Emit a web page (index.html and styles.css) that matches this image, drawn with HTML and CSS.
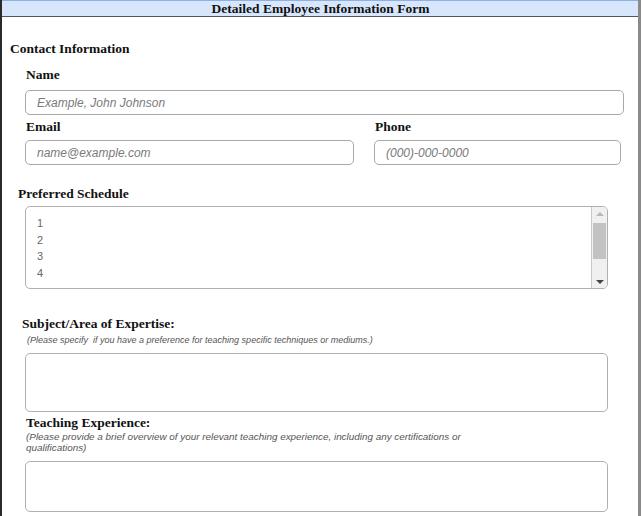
FILE: index.html
```html
<!DOCTYPE html>
<html>
<head>
<meta charset="utf-8">
<link rel="stylesheet" href="styles.css">
</head>
<body>
<div class="frame">
  <div class="titlebar">Detailed Employee Information Form</div>
  <div class="content">
    <h2 class="section">Contact Information</h2>
    <div class="field name-field">
      <label class="label">Name</label>
      <input class="input" type="text" placeholder="Example, John Johnson">
    </div>
    <div class="row">
      <div class="field email-field">
        <label class="label">Email</label>
        <input class="input" type="text" placeholder="name@example.com">
      </div>
      <div class="field phone-field">
        <label class="label">Phone</label>
        <input class="input" type="text" placeholder="(000)-000-0000">
      </div>
    </div>
    <div class="schedule">
      <label class="label">Preferred Schedule</label>
      <div class="listbox">
        <div class="options">
          <div class="option">1</div>
          <div class="option">2</div>
          <div class="option">3</div>
          <div class="option">4</div>
        </div>
        <div class="scrollbar">
          <div class="arrow up"></div>
          <div class="track"><div class="thumb"></div></div>
          <div class="arrow down"></div>
        </div>
      </div>
    </div>
    <div class="block subject">
      <label class="label">Subject/Area of Expertise:</label>
      <div class="note indent">(Please specify &nbsp;if you have a preference for teaching specific techniques or mediums.)</div>
      <textarea class="area area-tall"></textarea>
    </div>
    <div class="block teaching">
      <label class="label">Teaching Experience:</label>
      <div class="note wrap">(Please provide a brief overview of your relevant teaching experience, including any certifications or qualifications)</div>
      <textarea class="area area-short"></textarea>
    </div>
  </div>
</div>
</body>
</html>
```
FILE: styles.css
```css
* { box-sizing: border-box; }
html, body { margin: 0; padding: 0; background: #fff; }
body { font-family: "Liberation Serif", "Times New Roman", serif; color: #111; }

.frame {
  width: 641px;
  height: 516px;
  overflow: hidden;
  border-left: 2px solid #2a2a2a;
  border-right: 3px solid #8a8a8a;
  display: flex;
  flex-direction: column;
}
.titlebar {
  height: 17px;
  margin-left: -2px;
  margin-right: -3px;
  background: #d8e6fb;
  border: 1px solid #8fb0e6;
  border-bottom: 1px solid #555;
  text-align: center;
  font-weight: bold;
  font-size: 13.5px;
  line-height: 15px;
  color: #111;
}
.content {
  padding: 24px 0 0 7px;
  display: flex;
  flex-direction: column;
}
.section {
  margin: 0 0 0 1px;
  font-size: 13.5px;
  line-height: 16px;
  font-weight: bold;
}
.label {
  display: block;
  font-weight: bold;
  font-size: 13.5px;
  line-height: 16px;
}
.field { display: flex; flex-direction: column; }
.name-field { margin: 10px 0 0 16px; width: 599px; }
.name-field .label { margin-bottom: 7px; margin-left: 1px; }
.row { display: flex; margin: 4px 0 0 16px; }
.email-field { width: 329px; }
.phone-field { width: 247px; margin-left: 20px; }
.row .label { margin-bottom: 5px; margin-left: 1px; }

.input {
  height: 25px;
  border: 1px solid #a9a9a9;
  border-radius: 5px;
  padding: 0 11px;
  font-family: "Liberation Sans", Arial, sans-serif;
  font-size: 12px;
  font-style: italic;
  color: #333;
  background: #fff;
  outline: none;
}
.input::placeholder { color: #7a7a7a; }

.schedule { margin: 21px 0 0 9px; }
.schedule .label { margin-bottom: 4px; }
.listbox {
  margin-left: 7px;
  width: 583px;
  height: 83px;
  border: 1px solid #b0b0b0;
  border-radius: 5px;
  display: flex;
  overflow: hidden;
  font-family: "Liberation Sans", Arial, sans-serif;
}
.options { flex: 1; padding: 8px 0 0 11px; }
.option { font-size: 11px; line-height: 16.5px; color: #666; }
.scrollbar {
  width: 16px;
  border-left: 1px solid #c8c8c8;
  background: #f0f0f0;
  display: flex;
  flex-direction: column;
}
.arrow { height: 14px; position: relative; }
.arrow::after {
  content: "";
  position: absolute;
  left: 4px;
  width: 0; height: 0;
  border-left: 4px solid transparent;
  border-right: 4px solid transparent;
}
.arrow.up::after { top: 5px; border-bottom: 4px solid #b8b8b8; }
.arrow.down::after { top: 6px; border-top: 4px solid #444; }
.track { flex: 1; padding: 2px 1px 0 1px; }
.thumb { height: 36px; background: #c2c2c2; }

.subject { margin: 27px 0 0 13px; }
.teaching { margin: 3px 0 0 17px; }
.note {
  font-family: "Liberation Sans", Arial, sans-serif;
  font-style: italic;
  font-size: 9px;
  line-height: 11px;
  color: #555;
}
.note.indent { margin: 3px 0 0 5px; }
.note.wrap { width: 445px; font-size: 9.9px; margin: 0; }
.area {
  display: block;
  width: 583px;
  border: 1px solid #b0b0b0;
  border-radius: 5px;
  resize: none;
  outline: none;
  background: #fff;
}
.area-tall { height: 59px; margin: 7px 0 0 3px; }
.area-short { height: 51px; margin: 8px 0 0 -1px; }
```
